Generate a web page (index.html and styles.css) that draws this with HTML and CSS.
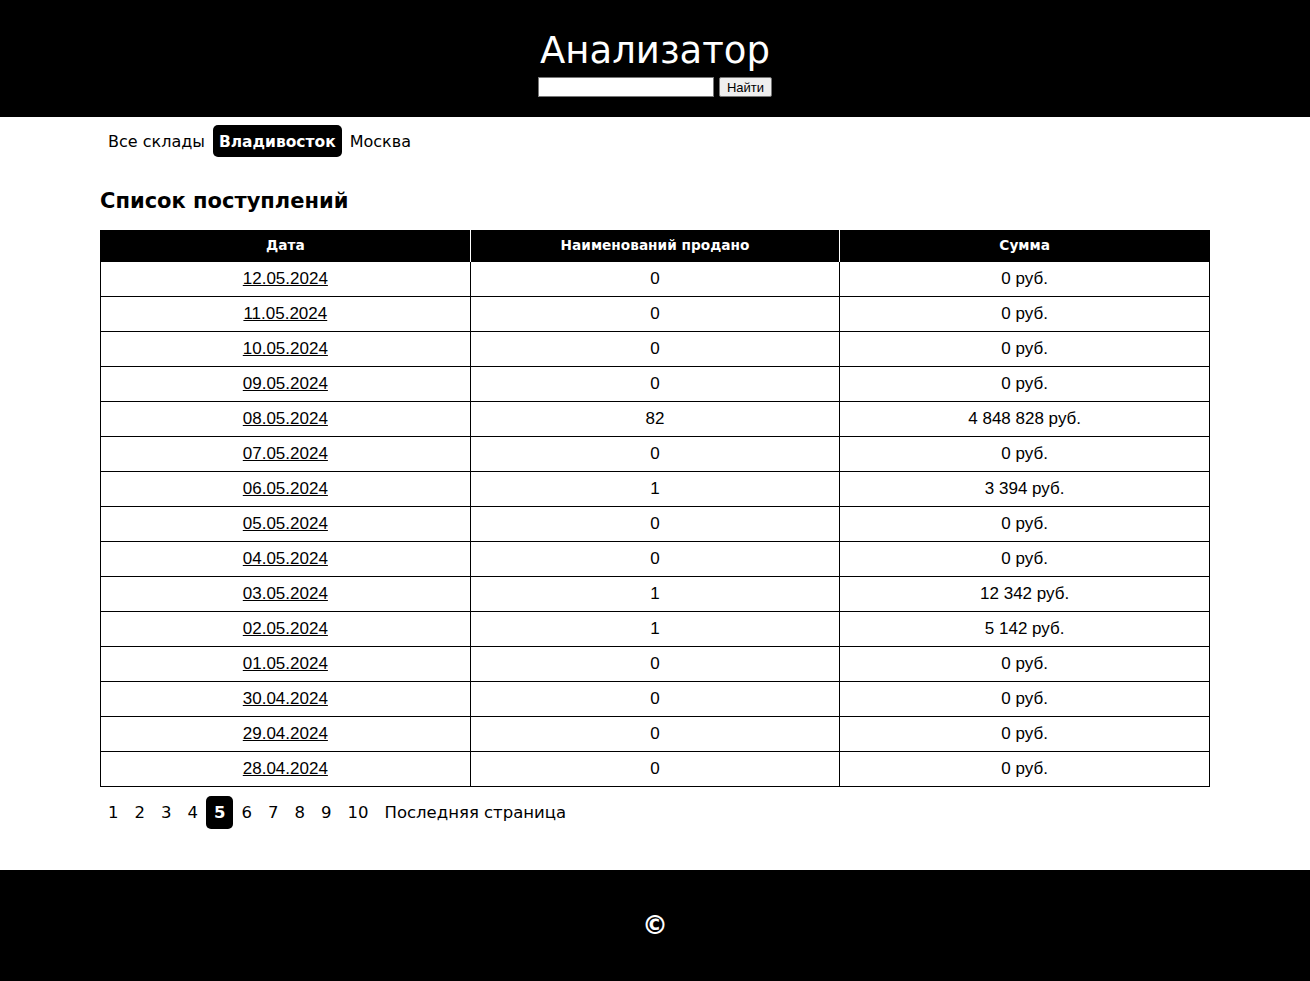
FILE: index.html
```html
<!DOCTYPE html>
<html lang="ru">
<head>
<meta charset="utf-8">
<title>Анализатор</title>
<link rel="stylesheet" href="styles.css">
</head>
<body>
<header class="site-header">
  <h1 class="site-title">Анализатор</h1>
  <form class="search">
    <input class="search-input" type="text">
    <button class="search-btn" type="button">Найти</button>
  </form>
</header>
<main class="container">
  <nav class="tabs">
    <a class="tab">Все склады</a>
    <a class="tab active">Владивосток</a>
    <a class="tab">Москва</a>
  </nav>
  <h2 class="page-title">Список поступлений</h2>
  <table class="data">
    <thead>
      <tr><th>Дата</th><th>Наименований продано</th><th>Сумма</th></tr>
    </thead>
    <tbody>
      <tr><td><a>12.05.2024</a></td><td>0</td><td>0 руб.</td></tr>
      <tr><td><a>11.05.2024</a></td><td>0</td><td>0 руб.</td></tr>
      <tr><td><a>10.05.2024</a></td><td>0</td><td>0 руб.</td></tr>
      <tr><td><a>09.05.2024</a></td><td>0</td><td>0 руб.</td></tr>
      <tr><td><a>08.05.2024</a></td><td>82</td><td>4 848 828 руб.</td></tr>
      <tr><td><a>07.05.2024</a></td><td>0</td><td>0 руб.</td></tr>
      <tr><td><a>06.05.2024</a></td><td>1</td><td>3 394 руб.</td></tr>
      <tr><td><a>05.05.2024</a></td><td>0</td><td>0 руб.</td></tr>
      <tr><td><a>04.05.2024</a></td><td>0</td><td>0 руб.</td></tr>
      <tr><td><a>03.05.2024</a></td><td>1</td><td>12 342 руб.</td></tr>
      <tr><td><a>02.05.2024</a></td><td>1</td><td>5 142 руб.</td></tr>
      <tr><td><a>01.05.2024</a></td><td>0</td><td>0 руб.</td></tr>
      <tr><td><a>30.04.2024</a></td><td>0</td><td>0 руб.</td></tr>
      <tr><td><a>29.04.2024</a></td><td>0</td><td>0 руб.</td></tr>
      <tr><td><a>28.04.2024</a></td><td>0</td><td>0 руб.</td></tr>
    </tbody>
  </table>
  <nav class="pager">
    <a class="page">1</a>
    <a class="page">2</a>
    <a class="page">3</a>
    <a class="page">4</a>
    <a class="page active">5</a>
    <a class="page">6</a>
    <a class="page">7</a>
    <a class="page">8</a>
    <a class="page">9</a>
    <a class="page">10</a>
    <a class="page">Последняя страница</a>
  </nav>
</main>
<footer class="site-footer">©</footer>
</body>
</html>
```

FILE: styles.css
```css
* { box-sizing: border-box; }
body {
  margin: 0;
  font-family: "DejaVu Sans", sans-serif;
  color: #000;
  background: #fff;
}
.site-header {
  background: #000;
  color: #fff;
  height: 117px;
  display: flex;
  flex-direction: column;
  align-items: center;
  padding-top: 27px;
}
.site-title {
  margin: 0;
  font-size: 37px;
  font-weight: normal;
  line-height: 48px;
  height: 48px;
}
.search {
  display: flex;
  gap: 5px;
  margin-top: 2px;
}
.search-input {
  width: 176px;
  height: 20px;
  border: 1px solid #767676;
  padding: 1px 2px;
  margin: 0;
}
.search-btn {
  height: 20px;
  width: 53px;
  padding: 0;
  margin: 0;
  font-family: "Liberation Sans", Arial, sans-serif;
  font-size: 13px;
  background: #efefef;
  border: 1px solid #767676;
  border-radius: 2px;
  color: #000;
}
.container {
  width: 1110px;
  margin: 0 auto;
}
.tabs {
  display: flex;
  margin-top: 8px;
  height: 32px;
}
.tab {
  display: flex;
  align-items: center;
  padding: 1px 8px 0;
  font-size: 16px;
  border-radius: 5px;
}
.tab.active {
  background: #000;
  color: #fff;
  font-weight: bold;
  font-size: 15.5px;
  padding: 1px 6px 0;
}
.page-title {
  margin: 30px 0 0;
  font-size: 21px;
  line-height: 28px;
  height: 43px;
}
.data {
  width: 1110px;
  border-collapse: collapse;
  table-layout: fixed;
}
.data th {
  background: #000;
  color: #fff;
  font-size: 13.7px;
  font-weight: bold;
  height: 31px;
  border-left: 1px solid #fff;
  padding: 0;
}
.data th:first-child { border-left: 1px solid #000; }
.data th:last-child { border-right: 1px solid #000; }
.data td {
  border: 1px solid #000;
  height: 35px;
  padding: 0;
  text-align: center;
  font-family: "Liberation Sans", Arial, sans-serif;
  font-size: 17px;
}
.data td a { text-decoration: underline; }
.pager {
  display: flex;
  margin-top: 9px;
  height: 33px;
}
.page {
  display: flex;
  align-items: center;
  padding: 0 8px;
  font-size: 16.5px;
  border-radius: 5px;
}
.page.active {
  background: #000;
  color: #fff;
  font-weight: bold;
}
.site-footer {
  margin-top: 41px;
  background: #000;
  color: #fff;
  height: 111px;
  display: flex;
  align-items: center;
  justify-content: center;
  font-size: 26px;
  font-weight: bold;
}
```
